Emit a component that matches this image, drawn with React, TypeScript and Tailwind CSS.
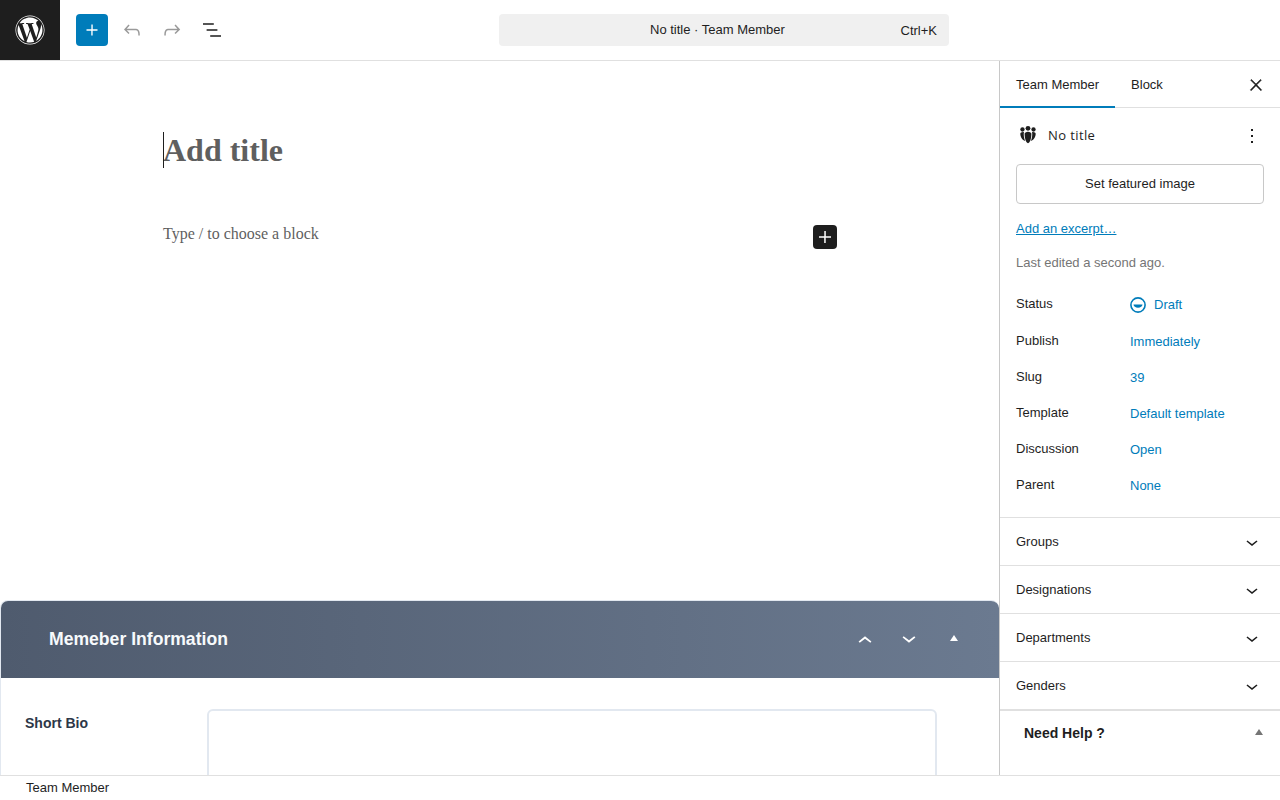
import type { ReactNode } from 'react';
import { FaWordpress } from 'react-icons/fa';

/* Paths from the block editor's icon set */
const ICONS = {
  plus: 'M18 11.2h-5.2V6h-1.5v5.2H6v1.5h5.2V18h1.5v-5.2H18z',
  undo: 'M18.3 11.7c-.6-.6-1.4-.9-2.3-.9H6.7l2.9-3.3-1.1-1-4.5 5L8.5 16l1-1-2.7-2.7H16c.5 0 .9.2 1.3.5 1 1 1 3.4 1 4.5v.3h1.5v-.2c0-1.5 0-4.3-1.5-5.7z',
  redo: 'M15.6 6.5l-1.1 1 2.9 3.3H8c-.9 0-1.7.3-2.3.9-1.4 1.5-1.4 4.2-1.4 5.6v.2h1.5v-.3c0-1.1 0-3.5 1-4.5.3-.3.7-.5 1.3-.5h9.2L14.5 15l1.1 1.1 4.6-4.6-4.6-5z',
  list: 'M13.8 5.2H3v1.5h10.8V5.2zm-3.6 12v1.5H21v-1.5H10.2zm7.2-6H6.6v1.5h10.8v-1.5z',
  close: 'M13 11.8l6.1-6.3-1-1-6.1 6.2-6.1-6.2-1 1 6.1 6.3-6.5 6.7 1 1 6.5-6.6 6.5 6.6 1-1z',
  more: 'M13 19h-2v-2h2v2zm0-6h-2v-2h2v2zm0-6h-2V5h2v2z',
  chevron: 'M17.5 11.6L12 16l-5.5-4.4.9-1.2L12 14l4.5-3.6 1 1.2z',
};

function Icon({ d, className }: { d: string; className?: string }) {
  return (
    <svg viewBox="0 0 24 24" className={className} fill="currentColor" aria-hidden="true">
      <path d={d} />
    </svg>
  );
}

function GroupsIcon() {
  return (
    <svg viewBox="0 0 20 20" className="w-6 h-6 text-[#1e1e1e]" fill="currentColor" aria-hidden="true">
      <circle cx="10" cy="3.600" r="2" />
      <circle cx="5.400" cy="4.600" r="1.800" />
      <circle cx="14.600" cy="4.600" r="1.800" />
      <path d="M7.200 8.200c0-1 1.200-1.800 2.800-1.800s2.800.8 2.800 1.800c0 3.400-.8 7.200-2.800 7.800-2-.6-2.800-4.400-2.800-7.800z" />
      <path d="M3.600 8.200c0-1 .9-1.600 2.300-1.600l.7.100c-.4 2.400 0 5.300 1 7.400-2.300-.5-4-3.300-4-5.900z" />
      <path d="M16.400 8.200c0-1-.9-1.600-2.300-1.600l-.7.100c.4 2.400 0 5.300-1 7.400 2.300-.5 4-3.300 4-5.900z" />
    </svg>
  );
}

function DraftIcon() {
  return (
    <svg viewBox="0 0 16 16" className="w-4 h-4" aria-hidden="true">
      <circle cx="8" cy="8" r="7.100" fill="none" stroke="currentColor" strokeWidth="1.600" />
      <path d="M3.500 7.500h9c0 2-2 3.200-4.500 3.200s-4.500-1.200-4.500-3.200z" fill="currentColor" />
    </svg>
  );
}

const SUMMARY = [
  { label: 'Publish', value: 'Immediately' },
  { label: 'Slug', value: '39' },
  { label: 'Template', value: 'Default template' },
  { label: 'Discussion', value: 'Open' },
  { label: 'Parent', value: 'None' },
];

const TAXONOMIES = ['Groups', 'Designations', 'Departments', 'Genders'];

function ToolButton({ children }: { children: ReactNode }) {
  return <button className="w-10 h-8 flex items-center justify-center">{children}</button>;
}

function TopBar() {
  return (
    <header className="h-[61px] flex-none flex bg-white border-b border-[#e0e0e0]">
      <div className="w-[60px] h-[60px] bg-[#1e1e1e] flex items-center justify-center">
        <FaWordpress className="w-[30px] h-[30px] text-white" />
      </div>
      <div className="w-[439px] flex items-center pl-4">
        <button className="w-8 h-8 rounded-sm bg-[#007cba] flex items-center justify-center text-white mr-1">
          <Icon d={ICONS.plus} className="w-[22px] h-[22px]" />
        </button>
        <ToolButton>
          <Icon d={ICONS.undo} className="w-6 h-6 text-[#9a9a9a]" />
        </ToolButton>
        <ToolButton>
          <Icon d={ICONS.redo} className="w-6 h-6 text-[#9a9a9a]" />
        </ToolButton>
        <ToolButton>
          <Icon d={ICONS.list} className="w-6 h-6 text-[#1e1e1e]" />
        </ToolButton>
      </div>
      <div className="w-[450px] h-8 mt-[14px] rounded-sm bg-[#f0f0f0] flex items-center justify-between pl-[151px] pr-3 text-[13px] text-[#1e1e1e]">
        <span>No title · Team Member</span>
        <span className="pt-px">Ctrl+K</span>
      </div>
    </header>
  );
}

function Editor() {
  return (
    <main className="flex-1 min-w-0 flex flex-col overflow-hidden bg-white">
      <div className="flex-1 pl-[163px] pt-[71px]">
        <h1 className="relative h-9 font-['Liberation_Serif',serif] text-[32px] leading-[37px] font-bold text-[#5f5f5f] w-fit">
          <span className="absolute left-0 top-0 w-px h-9 bg-[#1e1e1e]" />
          Add title
        </h1>
        <div className="w-[674px] mt-[57px] flex items-start justify-between">
          <p className="font-['Liberation_Serif',serif] text-[16px] leading-[18px] text-[#5f5f5f]">
            Type / to choose a block
          </p>
          <button className="w-6 h-6 rounded-sm bg-[#1e1e1e] flex items-center justify-center text-white">
            <Icon d={ICONS.plus} className="w-6 h-6" />
          </button>
        </div>
      </div>

      {/* Member metabox, cut off by the status bar */}
      <section className="h-[175px] flex-none border-l border-t border-[#e2e8f0] rounded-t-lg overflow-hidden">
        <div className="h-[77px] bg-gradient-to-r from-[#4f5b6e] to-[#6b7a90] flex items-center pl-12 pr-[32px]">
          <h2 className="flex-1 text-[17.6px] font-bold text-[#f7fafc]">Memeber Information</h2>
          <div className="flex items-center gap-4 text-white">
            <Icon d={ICONS.chevron} className="w-7 h-7 rotate-180 mt-[2px]" />
            <Icon d={ICONS.chevron} className="w-7 h-7 -mt-[3px]" />
            <span className="w-7 flex justify-center pl-[2px] -mt-[3px]">
              <span className="w-0 h-0 border-x-[4px] border-x-transparent border-b-[6px] border-b-white" />
            </span>
          </div>
        </div>
        <div className="h-[97px] flex items-start pl-6 pt-[31px]">
          <span className="w-[182px] pt-[5px] text-sm font-bold leading-[18px] text-[#2d3748]">Short Bio</span>
          <div className="w-[730px] h-[80px] border-2 border-[#e2e8f0] rounded-md bg-white" />
        </div>
      </section>
    </main>
  );
}

function Sidebar() {
  return (
    <aside className="w-[281px] flex-none border-l border-[#c8c8c8] bg-white text-[13px] text-[#1e1e1e] overflow-hidden">
      <div className="h-[47px] flex border-b border-[#e0e0e0]">
        <button className="h-[47px] px-4 pt-[2px] border-b-2 border-[#007cba]">Team Member</button>
        <button className="h-[47px] px-4">Block</button>
        <button className="ml-auto w-12 h-[47px] flex items-center justify-center">
          <Icon d={ICONS.close} className="w-[18px] h-[18px] stroke-current stroke-[0.8]" />
        </button>
      </div>

      <div className="h-[409px] px-4">
        <div className="h-[56px] flex items-center">
          <GroupsIcon />
          <span className="ml-2 font-['Open_Sans',sans-serif] text-[13px] font-medium tracking-[0.4px]">No title</span>
          <Icon d={ICONS.more} className="w-6 h-6 ml-auto" />
        </div>
        <button className="w-full h-10 border border-[#c8c8c8] rounded-sm">Set featured image</button>
        <a className="block mt-[17px] leading-[16px] text-[#007cba] underline">Add an excerpt…</a>
        <p className="mt-[18px] leading-[16px] text-[#757575]">Last edited a second ago.</p>

        <div className="mt-[18px]">
          <div className="h-[37px] flex">
            <span className="w-[114px] pt-[6px] leading-[18px]">Status</span>
            <span className="flex items-center h-[32px] gap-2 text-[#007cba]">
              <DraftIcon />
              Draft
            </span>
          </div>
          {SUMMARY.map((row) => (
            <div key={row.label} className="h-9 flex">
              <span className="w-[114px] pt-[6px] leading-[18px]">{row.label}</span>
              <span className="pt-[6px] leading-[20px] text-[#007cba]">{row.value}</span>
            </div>
          ))}
        </div>
      </div>

      {TAXONOMIES.map((name) => (
        <div key={name} className="h-12 flex items-center justify-between pl-4 pr-4 border-t border-[#e0e0e0]">
          <span className="mt-px">{name}</span>
          <Icon d={ICONS.chevron} className="w-6 h-6 mt-px" />
        </div>
      ))}

      <div className="h-[66px] flex items-start justify-between border-t-2 border-[#e0e0e0] pl-6 pr-[17px] pt-[13px]">
        <span className="text-sm font-bold leading-[18px]">Need Help ?</span>
        <span className="mt-[5px] w-0 h-0 border-x-[4px] border-x-transparent border-b-[6px] border-b-[#757575]" />
      </div>
    </aside>
  );
}

export default function App() {
  return (
    <div className="h-screen flex flex-col overflow-hidden bg-white font-['Liberation_Sans',Arial,sans-serif]">
      <TopBar />
      <div className="flex-1 min-h-0 flex">
        <Editor />
        <Sidebar />
      </div>
      <footer className="h-[25px] flex-none border-t border-[#e0e0e0] bg-white pl-[26px] text-[13px] leading-[24px] text-[#1e1e1e]">
        Team Member
      </footer>
    </div>
  );
}
